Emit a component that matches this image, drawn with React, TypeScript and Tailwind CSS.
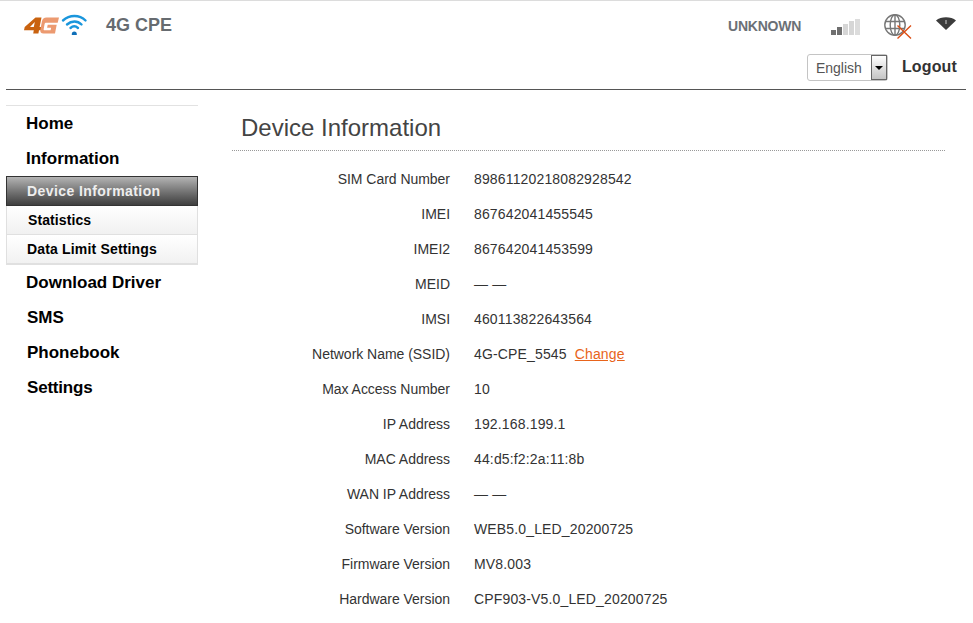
const F = "font-['Liberation_Sans',Arial,sans-serif]";

const rows: [string, string][] = [
  ["SIM Card Number", "89861120218082928542"],
  ["IMEI", "867642041455545"],
  ["IMEI2", "867642041453599"],
  ["MEID", "— —"],
  ["IMSI", "460113822643564"],
  ["Network Name (SSID)", "4G-CPE_5545"],
  ["Max Access Number", "10"],
  ["IP Address", "192.168.199.1"],
  ["MAC Address", "44:d5:f2:2a:11:8b"],
  ["WAN IP Address", "— —"],
  ["Software Version", "WEB5.0_LED_20200725"],
  ["Firmware Version", "MV8.003"],
  ["Hardware Version", "CPF903-V5.0_LED_20200725"],
];

function Logo() {
  return (
    <svg width="64" height="22" viewBox="0 0 64 22" className="block">
      <path d="M11.500 3.500h6l-1.900 9.500h2.400l-.6 3.200h-2.400l-.6 3.300h-5.200l.6-3.300H0l.7-3.200zM10.800 8L6 13h3.800z" fill="#c9620f" fillRule="evenodd" />
      <path d="M35 3.500H22.500c-2.600 0-4.100 1.300-4.600 3.900l-1.500 8c-.5 2.700.6 4.100 3.200 4.100H31l1.700-8.700h-9l-.6 3h4l-.5 2.500h-5.800c-1 0-1.300-.4-1.100-1.300l.9-5c.2-.9.700-1.300 1.600-1.300h11.500z" fill="#ec9a70" />
      <g fill="none" stroke="#1a96dc" strokeWidth="2.400" strokeLinecap="round">
        <path d="M39 6.500c6.500-6 16.500-6 22.500 0" />
        <path d="M43 10.500c4.500-4 10.500-4 14.500 0" />
        <path d="M46.500 14c2.500-2.200 5-2.200 7.500 0" />
      </g>
      <path d="M47.800 20a2.500 2.500 0 1 1 5 0v1h-5z" fill="#0f6fb8" />
    </svg>
  );
}

function Signal() {
  const bars = [
    ["h-[5px]", "bg-[#6f6f6f]"],
    ["h-[8px]", "bg-[#6f6f6f]"],
    ["h-[11px]", "bg-[#d6d6d6]"],
    ["h-[14px]", "bg-[#d6d6d6]"],
    ["h-[16px]", "bg-[#dcdcdc]"],
  ];
  return (
    <div className="flex items-end gap-[1px] h-[18px] w-[29px]">
      {bars.map(([h, c], i) => (
        <div key={i} className={`w-[5px] ${h} ${c}`} />
      ))}
    </div>
  );
}

function Globe() {
  return (
    <svg width="28" height="25" viewBox="0 0 28 25" className="block">
      <g fill="none" stroke="#777" strokeWidth="1.400">
        <circle cx="11" cy="11" r="10.200" />
        <ellipse cx="11" cy="11" rx="4.800" ry="10.200" />
        <path d="M11 1v20M1.800 7.500h18.400M1.800 14.500h18.400" />
      </g>
      <path d="M13.500 11.500l13.500 13M27 11.500L13.500 24.500" stroke="#dc4e14" strokeWidth="1.400" fill="none" />
    </svg>
  );
}

function WifiBadge() {
  return (
    <svg width="20" height="13" viewBox="0 0 20 13" className="block">
      <path d="M0 3.500C5-.8 15-.8 20 3.500L10 13z" fill="#3c3c3c" />
      <rect x="9.500" y="3" width="1" height="4" fill="#cfcfcf" />
    </svg>
  );
}

function TopLink({ children, className = "" }: { children: React.ReactNode; className?: string }) {
  return <div className={`h-[35px] flex items-center text-[17px] font-bold text-black ${className}`}>{children}</div>;
}

export default function App() {
  return (
    <div className={`${F} w-[973px] h-[623px] overflow-hidden bg-white border-t border-[#dcdcdc]`}>
      <header className="mx-[6px] w-[960px] h-[89px] border-b border-[#555] flex justify-between">
        <div className="flex items-start pt-[13px] pl-[18px]">
          <Logo />
          <span className="ml-[18px] text-[18px] leading-[22px] font-bold text-[#666b70]">4G CPE</span>
        </div>
        <div className="flex flex-col items-end pr-[9px] pt-[11px]">
          <div className="flex items-center h-[28px]">
            <span className="text-[14px] font-bold tracking-[-0.25px] text-[#6b7076]">UNKNOWN</span>
            <div className="ml-[30px]"><Signal /></div>
            <div className="ml-[24px] mt-[1px]"><Globe /></div>
            <div className="ml-[24px] mb-[6px] mr-[1px]"><WifiBadge /></div>
          </div>
          <div className="flex items-center mt-[14px]">
            <div className="w-[81px] h-[27px] border border-[#c4c4c4] rounded-[3px] flex items-center justify-between pl-[8px] pr-0 bg-white">
              <span className="text-[14px] mt-[1px] text-[#555]">English</span>
              <div className="w-[16px] h-[25px] border border-[#666] bg-gradient-to-b from-[#ffffff] to-[#c4c4c4] flex items-center justify-center">
                <div className="w-0 h-0 border-x-[4px] border-x-transparent border-t-[4px] border-t-black" />
              </div>
            </div>
            <span className="ml-[14px] mb-[2px] text-[16px] tracking-[0.15px] font-bold text-[#333]">Logout</span>
          </div>
        </div>
      </header>

      <div className="flex mt-[15px] ml-[6px]">
        <nav className="w-[192px] border-t border-[#e2e2e2]">
          <TopLink className="pl-[20px]">Home</TopLink>
          <TopLink className="pl-[20px]">Information</TopLink>
          <div className="text-[14px] font-bold">
            <div className="h-[30px] flex items-center pl-[20px] tracking-[0.42px] border border-[#333] bg-gradient-to-b from-[#b4b4b4] to-[#3f3f3f] text-[#eeeeee]">Device Information</div>
            <div className="h-[29px] flex items-center pl-[21px] tracking-[0.1px] border-x border-b border-[#e0e0e0] bg-gradient-to-b from-white to-[#f1f1f1] text-black">Statistics</div>
            <div className="h-[30px] flex items-center pl-[20px] tracking-[0.17px] border-x border-b-2 border-[#e0e0e0] bg-gradient-to-b from-white to-[#f1f1f1] text-black">Data Limit Settings</div>
          </div>
          <TopLink className="pl-[20px]">Download Driver</TopLink>
          <TopLink className="pl-[21px]">SMS</TopLink>
          <TopLink className="pl-[21px]">Phonebook</TopLink>
          <TopLink className="pl-[21px] tracking-[-0.2px]">Settings</TopLink>
        </nav>

        <main className="ml-[34px] w-[713px]">
          <h1 className="h-[46px] pl-[9px] pt-[7px] text-[24px] leading-[32px] font-normal text-[#444] border-b border-dotted border-[#999]">Device Information</h1>
          <div className="mt-[11px]">
            {rows.map(([k, v]) => (
              <div key={k} className="h-[35px] flex items-center text-[14px] text-[#333]">
                <div className="w-[218px] text-right tracking-[-0.03px]">{k}</div>
                <div className="ml-[24px] flex items-center tracking-[0.15px]">
                  <span>{v}</span>
                  {k.startsWith("Network") && <a className="ml-[8px] text-[#e8641b] underline">Change</a>}
                </div>
              </div>
            ))}
          </div>
        </main>
      </div>
    </div>
  );
}
